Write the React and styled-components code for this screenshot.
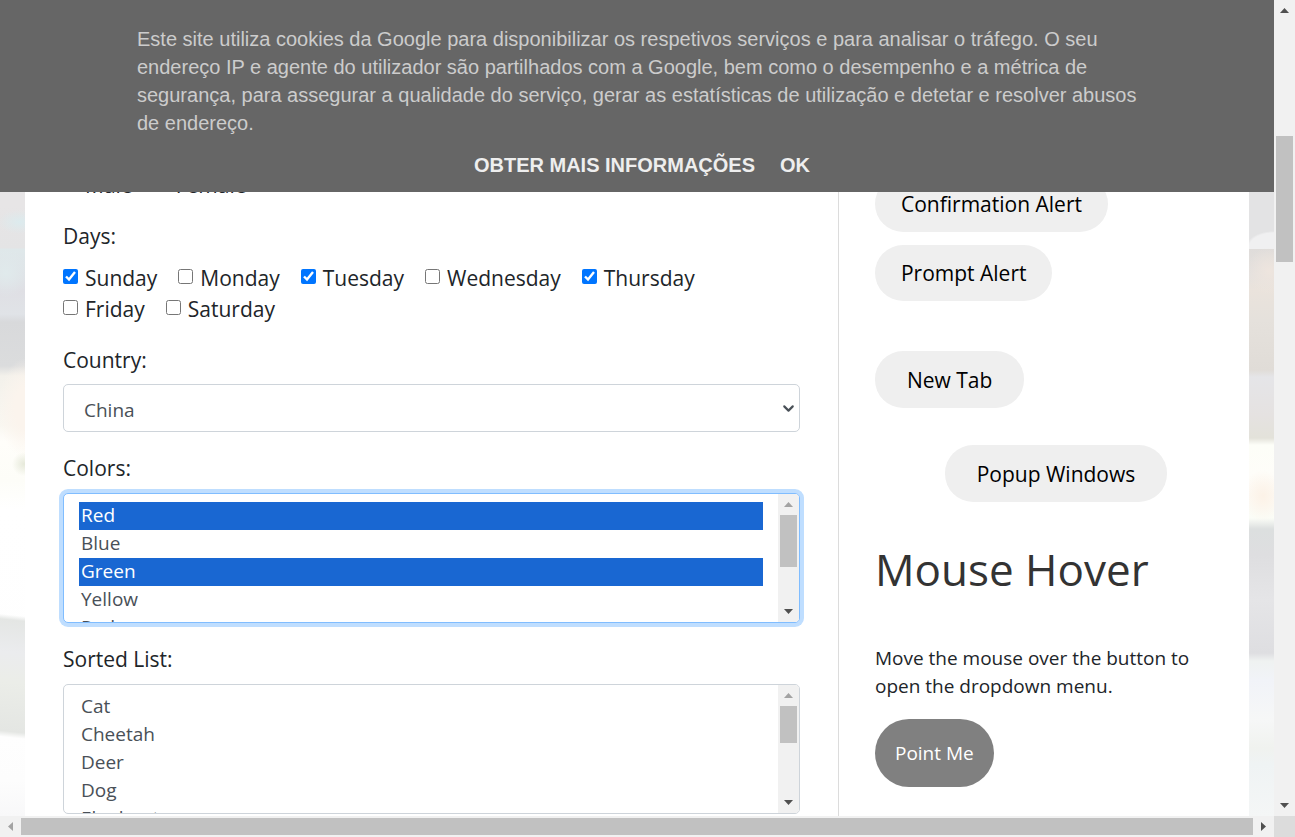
import React from "react";
import styled, { createGlobalStyle } from "styled-components";
import { ChevronDown } from "lucide-react";

const GlobalStyle = createGlobalStyle`
  *, *::before, *::after { box-sizing: border-box; }
  body {
    margin: 0;
    font-family: "Segoe UI", "Open Sans", "Noto Sans", sans-serif;
    font-size: 21px;
    line-height: 31px;
    color: #212529;
    background: #fff;
  }
  button, select, input { font-family: inherit; margin: 0; }
`;

const Frame = styled.div`
  display: grid;
  grid-template-columns: minmax(0, 1fr) 21px;
  grid-template-rows: minmax(0, 1fr) 21px;
  height: 100vh;
`;

const Viewport = styled.div`
  position: relative;
  display: flex;
  overflow: hidden;
`;

const Backdrop = styled.div`
  flex: 0 0 25px;
  background: ${(p) => p.$fill};
`;

const leftPhoto = `
  radial-gradient(ellipse 22px 12px at 20px 222px, #dcebee, transparent),
  radial-gradient(ellipse 24px 24px at 6px 273px, #e0eaec, transparent),
  radial-gradient(circle 12px at 24px 464px, #e6e9da, transparent),
  radial-gradient(ellipse 28px 50px at 26px 408px, #fbf4ed 40%, transparent),
  linear-gradient(186deg, transparent 613px, #e4e6e4 618px, #ebecee 650px, #ebede8 680px,
    #e4e6e3 729px, transparent 735px),
  linear-gradient(180deg, #e5e5e6 0, #e7e5e6 205px, #e4e4e5 248px, #dfe8ea 249px,
    #dfdfe4 290px, #e0e3e7 314px, #d8d9db 322px, #dbdcdd 366px, #f3f1eb 376px,
    #f9f7f1 425px, #fffefa 442px, #fdfdf8 480px, #ffffff 510px, #fefefe 736px,
    #fdfdfd 780px, #f8f8f9 816px)`;

const rightPhoto = `
  radial-gradient(ellipse 22px 24px at 20px 271px, #eee5de, transparent),
  radial-gradient(ellipse 20px 26px at 14px 496px, #fcf2e7, transparent),
  linear-gradient(180deg, transparent 249px, #dfdcda 249px, #e5e1de 275px, #eae3dc 290px,
    #e5e1dc 320px, #e0dcd7 370px, #e5e5e8 377px, #e5e2e1 415px, #e3e2da 438px,
    #fdfef8 445px, #fefdf9 475px, #fdfaf5 495px, #fbfdf7 518px, #dcdfdf 529px,
    #dedee0 555px, #e5e5e7 600px, #dedee1 653px, #eff2f1 661px, #f1f3f8 680px,
    #f6f7f7 720px, #f0f2ef 748px, #eff3f4 765px, #f4f6f6 816px),
  radial-gradient(ellipse 28px 16px at 25px 247px, #f0f0f1 88%, transparent),
  #e3e3e4`;

const Sheet = styled.main`
  flex: 1;
  min-width: 0;
  display: flex;
  background: #fff;
`;

const FormColumn = styled.form`
  flex: 0 0 66.5%;
  min-width: 0;
  display: flex;
  flex-direction: column;
  gap: 20px;
  padding: 170px 38px 0;
  border-right: 1px solid #dcdcdc;
`;

const SideColumn = styled.aside`
  flex: 1;
  min-width: 0;
  display: flex;
  flex-direction: column;
  align-items: flex-start;
  padding: 176px 12px 0 36px;
`;

const Field = styled.div`
  display: flex;
  flex-direction: column;
  gap: ${(p) => (p.$list ? "9px" : "8px")};
  padding-bottom: 1px;
`;

const Caption = styled.label`
  color: #212529;
`;

const ChoiceGroup = styled.fieldset`
  border: 0;
  margin: 0;
  padding: 0;
  min-width: 0;
`;

const Legend = styled.legend`
  padding: 0;
  margin-bottom: 11px;
`;

const Choices = styled.div`
  display: flex;
  flex-wrap: wrap;
  column-gap: 21px;
  padding-right: 40px;
`;

const Choice = styled.label`
  display: flex;
  align-items: center;
  gap: 7px;
`;

const Tick = styled.input`
  width: 15px;
  height: 15px;
  margin-bottom: 5px;
  accent-color: #0075ff;
`;

const SelectBox = styled.div`
  position: relative;
  display: flex;
  color: #495057;

  svg {
    position: absolute;
    right: 3px;
    top: 16px;
    pointer-events: none;
  }
`;

const DropDown = styled.select`
  appearance: none;
  width: 100%;
  height: 48px;
  padding: 4px 20px 0;
  border: 1px solid #ced4da;
  border-radius: 5px;
  background: #fff;
  color: inherit;
  font-size: 19px;
`;

const ListFrame = styled.div`
  display: flex;
  height: 130px;
  overflow: hidden;
  background: #fff;
  border: 1px solid ${(p) => (p.$active ? "#80bdff" : "#ced4da")};
  border-radius: 5px;
  box-shadow: ${(p) => (p.$active ? "0 0 0 4px #bfdeff" : "none")};
`;

const List = styled.select`
  flex: 1;
  min-width: 0;
  padding: 8px 15px 0;
  border: 0;
  outline: 0;
  background: transparent;
  color: #495057;
  font-size: 19px;
  scrollbar-width: none;

  option {
    height: 28px;
    line-height: 34px;
    padding: 0 2px;
  }

  option:checked {
    color: #fff;
    background: #1967d2 linear-gradient(#1967d2, #1967d2);
  }
`;

const Track = styled.div`
  display: flex;
  flex-direction: ${(p) => (p.$horizontal ? "row" : "column")};
  align-items: center;
  flex: 0 0 21px;
  background: #f1f1f1;
`;

const ArrowSlot = styled.span`
  flex: 0 0 21px;
  width: 21px;
  height: 21px;
  display: flex;
  align-items: center;
  justify-content: center;
  color: ${(p) => (p.$dim ? "#a3a3a3" : "#505050")};
`;

const Space = styled.span`
  flex: ${(p) => p.$grow} 1 0;
`;

const Thumb = styled.span`
  flex: ${(p) => p.$grow} 1 0;
  width: ${(p) => (p.$horizontal ? "auto" : "17px")};
  height: ${(p) => (p.$horizontal ? "17px" : "auto")};
  background: #c1c1c1;
`;

const Corner = styled.div`
  background: #dcdcdc;
`;

const Pill = styled.button`
  height: ${(p) => (p.$wide ? "57px" : "56px")};
  padding: 0 ${(p) => (p.$wide ? "32px" : "26px")};
  border: 0;
  border-radius: 28px;
  background: #efefef;
  color: #000;
  font-size: 21px;
  white-space: nowrap;
`;

const AlertButtons = styled.div`
  display: flex;
  flex-direction: column;
  align-items: flex-start;
  gap: 13px;
  margin-bottom: 50px;
`;

const PopupRow = styled.div`
  align-self: stretch;
  display: flex;
  justify-content: center;
  margin: 37px 0 35px;
`;

const Heading = styled.h2`
  margin: 0 0 43px;
  font-family: "Open Sans", sans-serif;
  font-size: 44px;
  font-weight: 400;
  line-height: 64px;
  color: #333;
`;

const Note = styled.p`
  margin: 0 0 19px;
  padding-right: 30px;
  font-size: 19px;
  line-height: 28px;
`;

const HoverButton = styled.button`
  height: 68px;
  padding: 0 20px;
  border: 0;
  border-radius: 34px;
  background: #808080;
  color: #fff;
  font-size: 19px;
`;

const CookieBar = styled.section`
  position: absolute;
  inset: 0 0 auto;
  height: 192px;
  padding-top: 25px;
  background: #666;
  color: #ccc;
  font-family: Arial, "Liberation Sans", sans-serif;
  font-size: 20px;
  line-height: 28px;
`;

const CookieText = styled.p`
  max-width: 1000px;
  margin: 0 auto 14px;
`;

const CookieLinks = styled.nav`
  display: flex;
  justify-content: center;
  gap: 25px;
  padding-left: 10px;

  a {
    color: #eee;
    font-weight: 700;
    text-decoration: none;
  }
`;

const arrowPaths = {
  up: "M0 7 L4.5 2 L9 7 Z",
  down: "M0 2 L4.5 7 L9 2 Z",
  left: "M7 0 L2 4.5 L7 9 Z",
  right: "M2 0 L7 4.5 L2 9 Z",
};

function Arrow({ to, dim }) {
  return (
    <ArrowSlot $dim={dim}>
      <svg width="9" height="9" viewBox="0 0 9 9" aria-hidden="true">
        <path d={arrowPaths[to]} fill="currentColor" />
      </svg>
    </ArrowSlot>
  );
}

function ScrollBar({ horizontal, before = 0, thumb, after, dimStart }) {
  return (
    <Track $horizontal={horizontal} aria-hidden="true">
      <Arrow to={horizontal ? "left" : "up"} dim={dimStart} />
      <Space $grow={before} />
      <Thumb $horizontal={horizontal} $grow={thumb} />
      <Space $grow={after} />
      <Arrow to={horizontal ? "right" : "down"} />
    </Track>
  );
}

function ListField({ id, label, options, selected, active, thumb, after }) {
  return (
    <Field $list>
      <Caption htmlFor={id}>{label}</Caption>
      <ListFrame $active={active}>
        <List id={id} multiple size={4} defaultValue={selected}>
          {options.map(([value, text]) => (
            <option key={value} value={value}>{text}</option>
          ))}
        </List>
        <ScrollBar thumb={thumb} after={after} dimStart />
      </ListFrame>
    </Field>
  );
}

const days = [
  ["Sunday", true], ["Monday", false], ["Tuesday", true], ["Wednesday", false],
  ["Thursday", true], ["Friday", false], ["Saturday", false],
];

const colors = [
  ["red", "Red"], ["blue", "Blue"], ["green", "Green"], ["yellow", "Yellow"],
  ["red2", "Red"], ["white", "White"], ["green2", "Green"],
];

const animals = [
  "Cat", "Cheetah", "Deer", "Dog", "Elephant", "Fox", "Giraffe", "Lion", "Rabbit", "Zebra",
].map((name) => [name.toLowerCase(), name]);

export default function App() {
  return (
    <>
      <GlobalStyle />
      <Frame>
        <Viewport>
          <Backdrop $fill={leftPhoto} />
          <Sheet>
            <FormColumn>
              <Choices>
                <Choice><Tick type="radio" name="gender" />Male</Choice>
                <Choice><Tick type="radio" name="gender" />Female</Choice>
              </Choices>
              <ChoiceGroup>
                <Legend>Days:</Legend>
                <Choices>
                  {days.map(([day, on]) => (
                    <Choice key={day}>
                      <Tick type="checkbox" defaultChecked={on} />
                      {day}
                    </Choice>
                  ))}
                </Choices>
              </ChoiceGroup>
              <Field>
                <Caption htmlFor="country">Country:</Caption>
                <SelectBox>
                  <DropDown id="country" defaultValue="china">
                    <option value="china">China</option>
                  </DropDown>
                  <ChevronDown size={17} strokeWidth={3} />
                </SelectBox>
              </Field>
              <ListField id="colors" label="Colors:" options={colors}
                selected={["red", "green"]} active thumb={52} after={34} />
              <ListField id="animals" label="Sorted List:" options={animals}
                selected={[]} thumb={37} after={49} />
            </FormColumn>
            <SideColumn>
              <AlertButtons>
                <Pill type="button">Confirmation Alert</Pill>
                <Pill type="button">Prompt Alert</Pill>
              </AlertButtons>
              <Pill type="button" $wide>New Tab</Pill>
              <PopupRow>
                <Pill type="button" $wide>Popup Windows</Pill>
              </PopupRow>
              <Heading>Mouse Hover</Heading>
              <Note>Move the mouse over the button to open the dropdown menu.</Note>
              <HoverButton type="button">Point Me</HoverButton>
            </SideColumn>
          </Sheet>
          <Backdrop $fill={rightPhoto} />
          <CookieBar>
            <CookieText>
              Este site utiliza cookies da Google para disponibilizar os respetivos serviços e para
              analisar o tráfego. O seu endereço IP e agente do utilizador são partilhados com a
              Google, bem como o desempenho e a métrica de segurança, para assegurar a qualidade do
              serviço, gerar as estatísticas de utilização e detetar e resolver abusos de endereço.
            </CookieText>
            <CookieLinks>
              <a href="#info">OBTER MAIS INFORMAÇÕES</a>
              <a href="#ok">OK</a>
            </CookieLinks>
          </CookieBar>
        </Viewport>
        <ScrollBar before={115} thumb={126} after={533} />
        <ScrollBar horizontal thumb={1} after={0} dimStart />
        <Corner />
      </Frame>
    </>
  );
}
